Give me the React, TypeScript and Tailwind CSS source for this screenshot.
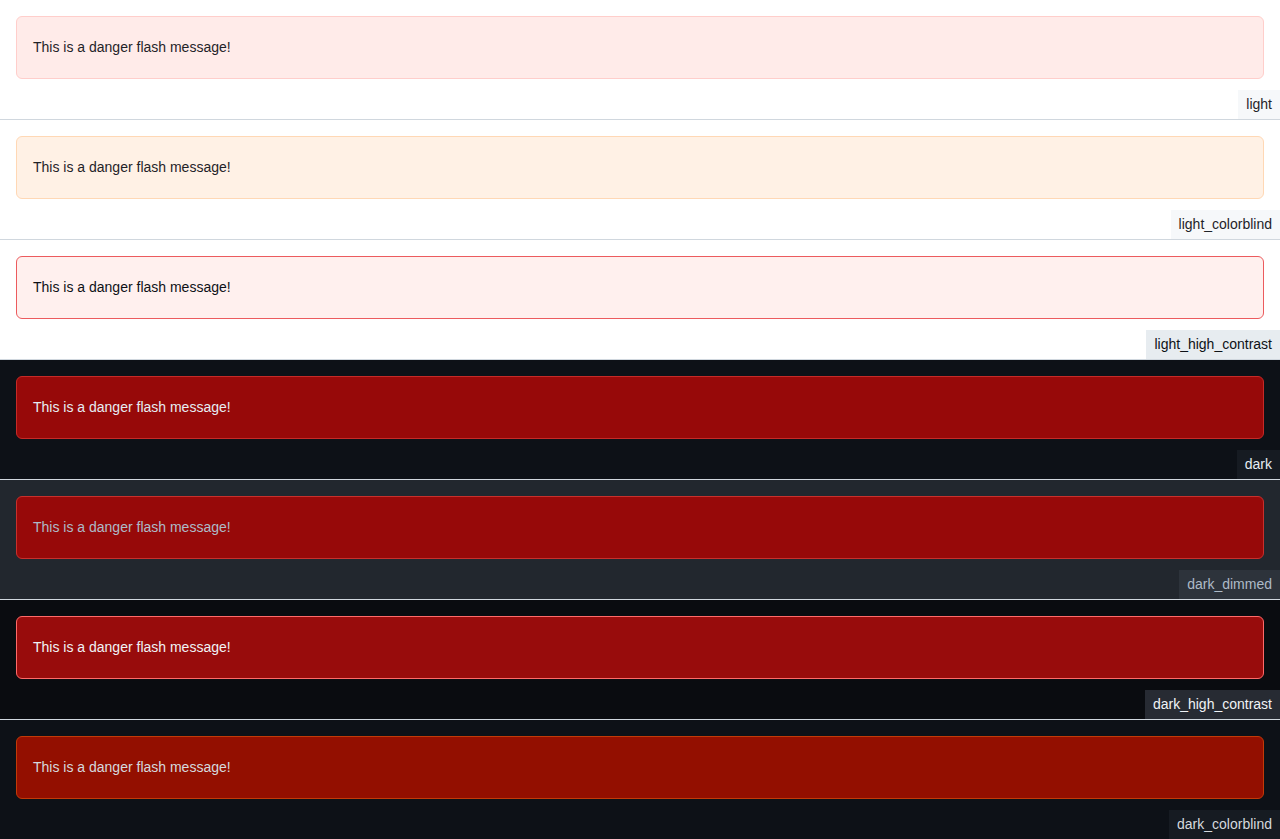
const THEMES = [
  {
    name: 'light',
    page: 'bg-white',
    flash: 'bg-[#ffebe9] border-[#ffcecb] text-[#1f2328]',
    label: 'bg-[#f6f8fa] text-[#1f2328]',
  },
  {
    name: 'light_colorblind',
    page: 'bg-white',
    flash: 'bg-[#fff1e5] border-[#ffd8b5] text-[#1f2328]',
    label: 'bg-[#f6f8fa] text-[#1f2328]',
  },
  {
    name: 'light_high_contrast',
    page: 'bg-white',
    flash: 'bg-[#fff0ee] border-[#ec5b5e] text-[#0e1116]',
    label: 'bg-[#e7ecf0] text-[#0e1116]',
  },
  {
    name: 'dark',
    page: 'bg-[#0d1117]',
    flash: 'bg-[#970909] border-[#c62a27] text-[#e6edf3]',
    label: 'bg-[#161b22] text-[#e6edf3]',
  },
  {
    name: 'dark_dimmed',
    page: 'bg-[#22272e]',
    flash: 'bg-[#970909] border-[#c8302c] text-[#adbac7]',
    label: 'bg-[#2d333b] text-[#adbac7]',
  },
  {
    name: 'dark_high_contrast',
    page: 'bg-[#0a0c10]',
    flash: 'bg-[#980c0c] border-[#ff6a69] text-[#f0f3f6]',
    label: 'bg-[#272b33] text-[#f0f3f6]',
  },
  {
    name: 'dark_colorblind',
    page: 'bg-[#0d1117]',
    flash: 'bg-[#930f00] border-[#c23a08] text-[#d5d9de]',
    label: 'bg-[#161b22] text-[#d5d9de]',
  },
];

export default function App() {
  return (
    <div className="font-['Liberation_Sans',Arial,sans-serif] text-[14px] leading-[21px]">
      {THEMES.map(t => (
        <div
          key={t.name}
          className={`flex h-[120px] flex-col border-b border-[#d0d7de] ${t.page}`}
        >
          <div className="px-4 pt-4">
            <div className={`rounded-md border px-4 py-5 ${t.flash}`}>
              This is a danger flash message!
            </div>
          </div>
          <div className={`mt-auto self-end px-2 py-1 ${t.label}`}>{t.name}</div>
        </div>
      ))}
    </div>
  );
}
